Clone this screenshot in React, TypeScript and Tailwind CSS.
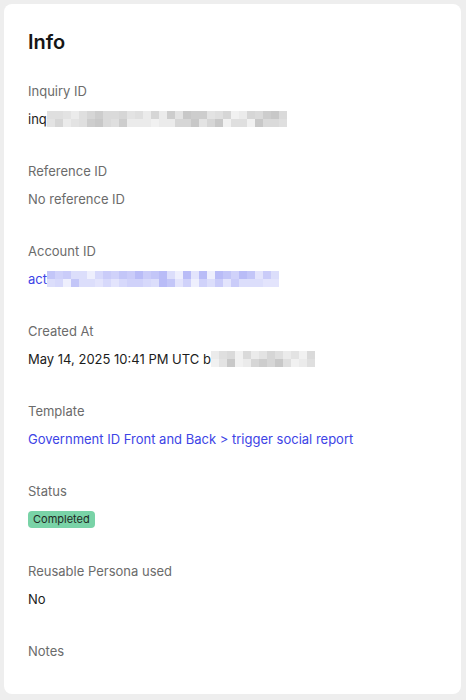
import React from 'react';

const grayShades = [
    'bg-[#e3e3e3]',
    'bg-[#d6d6d6]',
    'bg-[#cdcdcd]',
    'bg-[#ebebeb]',
    'bg-[#dadada]',
    'bg-[#c8c8c8]',
    'bg-[#f1f1f1]',
    'bg-[#dfdfdf]',
];

const blueShades = [
    'bg-[#d7d9fb]',
    'bg-[#caccf9]',
    'bg-[#b9bcf7]',
    'bg-[#e3e4fc]',
    'bg-[#dcdefb]',
    'bg-[#eeeffd]',
    'bg-[#c3c6f8]',
    'bg-[#d0d2fa]',
];

// pixelated "redacted" strip, deterministic pattern so the shot is stable
function Mosaic({ cols, seed, shades }: { cols: number; seed: number; shades: string[] }) {
    let s = seed;
    const next = () => {
        s = (s * 9301 + 49297) % 233280;
        return Math.floor((s / 233280) * shades.length);
    };
    const rows = [0, 1].map(() => Array.from({ length: cols }, () => shades[next()]));
    return (
        <span className="inline-flex flex-col align-middle">
            {rows.map((row, r) => (
                <span key={r} className="flex">
                    {row.map((cls, c) => (
                        <span key={c} className={`w-2 h-2 ${cls}`} />
                    ))}
                </span>
            ))}
        </span>
    );
}

function Field({ label, children }: { label: string; children?: React.ReactNode }) {
    return (
        <div className="flex flex-col">
            <div className="text-[13px] leading-5 text-[#6b6b6b]">{label}</div>
            {children !== undefined && (
                <div className="mt-2 h-5 flex items-center text-[13px] leading-5 text-[#1c1c1c]">{children}</div>
            )}
        </div>
    );
}

export default function App() {
    return (
        <div className="h-screen w-full bg-[#eeeeee] p-1 pb-[6px] pr-[5px]" style={{ fontFamily: 'Inter, "Noto Sans", sans-serif' }}>
            <div className="h-full bg-white rounded-lg px-6 pt-6">
                <h2 className="text-xl leading-7 font-semibold text-[#161616] mb-[25px]">Info</h2>

                <div className="flex flex-col gap-8">
                    <Field label="Inquiry ID">
                        <span>inq</span>
                        <Mosaic cols={30} seed={17} shades={grayShades} />
                    </Field>

                    <Field label="Reference ID">
                        <span className="text-[#6b6b6b]">No reference ID</span>
                    </Field>

                    <Field label="Account ID">
                        <span className="text-[#3d44e6]">act</span>
                        <Mosaic cols={29} seed={41} shades={blueShades} />
                    </Field>

                    <Field label="Created At">
                        <span>May 14, 2025 10:41 PM UTC b</span>
                        <Mosaic cols={13} seed={5} shades={grayShades} />
                    </Field>

                    <Field label="Template">
                        <span className="text-[#3d44e6]">Government ID Front and Back &gt; trigger social report</span>
                    </Field>

                    <Field label="Status">
                        <span className="inline-flex items-center h-[17px] px-[5px] rounded bg-[#79d3a7] text-[11px] text-[#1f2a24]">
                            Completed
                        </span>
                    </Field>

                    <Field label="Reusable Persona used">
                        <span>No</span>
                    </Field>

                    <Field label="Notes" />
                </div>
            </div>
        </div>
    );
}
